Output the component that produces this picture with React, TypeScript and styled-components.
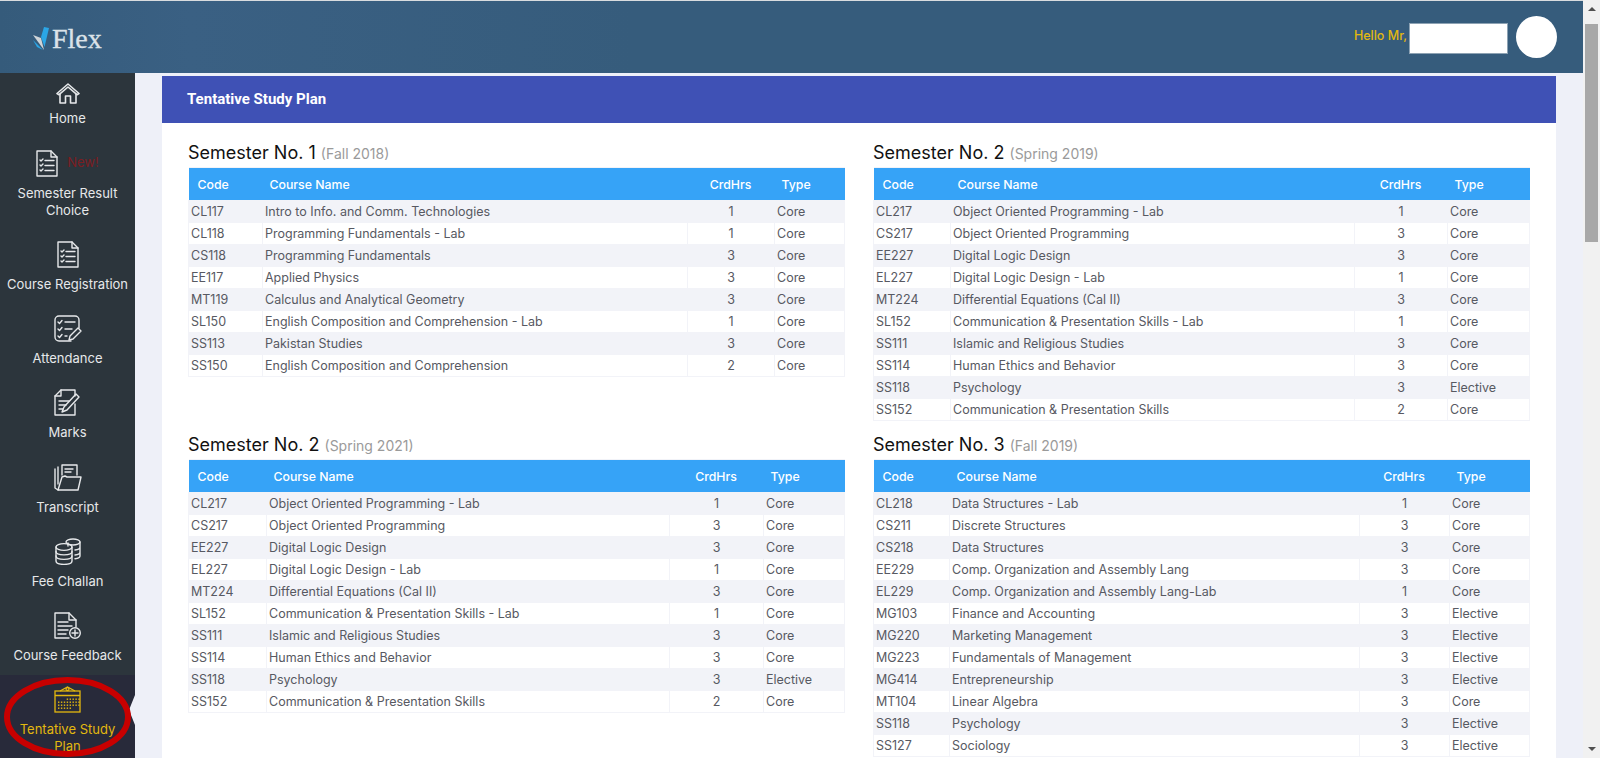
import React from 'react';
import styled, { createGlobalStyle } from 'styled-components';

const GlobalStyle = createGlobalStyle`
  html, body { margin: 0; padding: 0; height: 100%; overflow: hidden; background: #eef0f8; }
  #root { height: 100%; }
  * { box-sizing: border-box; }
`;

const FONT = `Inter, "Open Sans", "Liberation Sans", sans-serif`;

const Page = styled.div`
  display: flex;
  height: 758px;
  width: 1600px;
  font-family: ${FONT};
  overflow: hidden;
`;

const Viewport = styled.div`
  flex: 1;
  min-width: 0;
  display: flex;
  flex-direction: column;
  border-top: 1px solid #d9dcdf;
`;

const TopBar = styled.header`
  height: 72px;
  flex: none;
  display: flex;
  align-items: center;
  justify-content: space-between;
  background: linear-gradient(90deg, #355b7b 0%, #3a6083 12%, #365c7c 40%, #365c7c 100%);
  padding: 0 26px 0 33px;
`;

const Logo = styled.div`
  display: flex;
  align-items: center;
  gap: 2px;
  margin-top: 3px;
`;

const LogoText = styled.span`
  font-family: "Liberation Serif", serif;
  font-size: 28px;
  line-height: 1;
  color: #dbe2e8;
  -webkit-text-stroke: 0.35px #dbe2e8;
`;

const UserArea = styled.div`
  display: flex;
  align-items: center;
`;

const Hello = styled.span`
  font-size: 12.5px;
  font-weight: 500;
  color: #e3b80f;
  margin-right: 2px;
  margin-top: -3px;
`;

const NameBox = styled.div`
  width: 99px;
  height: 31px;
  background: #fff;
  border: 1px solid #8da2b3;
  margin-top: 3px;
`;

const Avatar = styled.div`
  width: 41px;
  height: 42px;
  border-radius: 50%;
  background: #fff;
  margin-left: 8px;
  margin-top: -1px;
`;

const Body = styled.div`
  flex: 1;
  min-height: 0;
  display: flex;
`;

const Sidebar = styled.nav`
  width: 135px;
  flex: none;
  background: #2c353c;
  display: flex;
  flex-direction: column;
`;

const NavItem = styled.div<{ $active?: boolean; $home?: boolean }>`
  position: relative;
  display: flex;
  flex-direction: column;
  align-items: center;
  padding: ${(p) => (p.$home ? '10px 0 12px' : '11px 0')};
  background: ${(p) => (p.$active ? '#282a3a' : 'transparent')};
  color: ${(p) => (p.$active ? '#e3b80f' : '#e6e8ea')};
  flex: ${(p) => (p.$active ? '1' : 'none')};
`;

const IconRow = styled.div<{ $home?: boolean }>`
  height: ${(p) => (p.$home ? '21px' : '27px')};
  margin-bottom: ${(p) => (p.$home ? '6px' : '8px')};
  display: flex;
  align-items: center;
  justify-content: center;

  svg {
    display: block;
  }
`;

const NewTag = styled.span`
  margin: -4px 0 0 9px;
  font-size: 13px;
  color: #7c1d22;
  white-space: nowrap;
`;

const NavLabel = styled.div`
  font-size: 13px;
  font-weight: 400;
  line-height: 17.1px;
  text-align: center;
`;

const Notch = styled.div`
  position: absolute;
  right: 0;
  top: 20px;
  width: 0;
  height: 0;
  border-top: 15px solid transparent;
  border-bottom: 15px solid transparent;
  border-right: 6px solid #eef0f8;
`;

const Annotation = styled.svg`
  position: absolute;
  left: 0;
  top: 0;
  pointer-events: none;
`;

const Main = styled.main`
  flex: 1;
  min-width: 0;
  padding: 3px 27px 0;
  background: #eef0f8;
  overflow: hidden;
`;

const Card = styled.section`
  background: #fff;
`;

const CardHead = styled.div`
  height: 47px;
  background: #3f51b5;
  display: flex;
  align-items: center;
  padding: 0 0 2px 25px;
  font-family: Roboto, sans-serif;
  font-weight: 700;
  font-size: 15px;
  color: #fff;
`;

const SemesterGrid = styled.div`
  display: grid;
  grid-template-columns: 657px 657px;
  column-gap: 28px;
  row-gap: 10px;
  padding: 16px 26px 40px;
`;

const Semester = styled.div``;

const Heading = styled.h3`
  margin: 0;
  height: 28px;
  line-height: 27px;
  font-size: 18px;
  font-weight: 400;
  color: #111;
`;

const Term = styled.small`
  font-size: 14px;
  font-weight: 400;
  color: #9a9a9a;
`;

const Table = styled.table`
  width: 656px;
  table-layout: fixed;
  border-collapse: collapse;
  font-size: 12.5px;
`;

const Th = styled.th<{ $center?: boolean }>`
  height: 33px;
  padding: 0 8px 0 7px;
  background: #36a3f7;
  border: 1px solid #f2f3f8;
  border-width: 1px 0;
  color: #fff;
  font-weight: 500;
  font-size: 12.3px;
  text-align: ${(p) => (p.$center ? 'center' : 'left')};

  &:first-child {
    padding-left: 9px;
  }
`;

const Td = styled.td<{ $center?: boolean }>`
  height: 22px;
  padding: 0 2px;
  border: 1px solid #f2f3f8;
  color: #575962;
  line-height: 20px;
  white-space: nowrap;
  text-align: ${(p) => (p.$center ? 'center' : 'left')};
`;

const Row = styled.tr`
  &:nth-child(odd) td {
    background: #f2f3f8;
  }
`;

const Scrollbar = styled.div`
  width: 17px;
  flex: none;
  background: #f1f1f1;
  display: flex;
  flex-direction: column;
  align-items: center;
`;

const ArrowUp = styled.div`
  width: 0;
  height: 0;
  margin: 7px 0 13px;
  border-left: 4px solid transparent;
  border-right: 4px solid transparent;
  border-bottom: 4px solid #505050;
`;

const ArrowDown = styled.div`
  width: 0;
  height: 0;
  margin-top: auto;
  margin-bottom: 7px;
  border-left: 4px solid transparent;
  border-right: 4px solid transparent;
  border-top: 4px solid #505050;
`;

const Thumb = styled.div`
  width: 13px;
  height: 218px;
  background: #a8a8a8;
`;

const S = { fill: 'none', stroke: 'currentColor', strokeWidth: 1.4, strokeLinecap: 'round', strokeLinejoin: 'round' } as const;

const HomeIcon = () => (
  <svg width="24" height="21" viewBox="0 0 24 21" {...S} strokeWidth={1.6}>
    <path d="M1 10.500 12 1l11 9.500-2 1.200-9-7.700-9 7.700z" />
    <path d="M4 11v9h5.500v-7h5v7H20v-9" />
  </svg>
);

const ChecklistDoc = () => (
  <svg width="22" height="27" viewBox="0 0 22 27" {...S}>
    <path d="M1 1h14l6 6v19H1z" />
    <path d="M15 1v6h6" />
    <path d="M4 10l1 1 2-2M9 10.500h9M4 15l1 1 2-2M9 15.500h9M4 20l1 1 2-2M9 20.500h9" />
  </svg>
);

const AttendanceIcon = () => (
  <svg width="28" height="27" viewBox="0 0 28 27" {...S}>
    <path d="M17 26H5a4 4 0 0 1-4-4V5a4 4 0 0 1 4-4h16a4 4 0 0 1 4 4v8" />
    <path d="M4 7l1.500 1.500L8 5.500M11 7h10M4 14l1.500 1.500L8 12.500M11 14h7M4 21l1.500 1.500L8 19.500M11 21h2" />
    <path d="M15 25l1-4 8-8 3 3-8 8z" />
  </svg>
);

const MarksIcon = () => (
  <svg width="27" height="27" viewBox="0 0 27 27" {...S}>
    <path d="M7 1h14v6M7 1 1 7v19h20V15" />
    <path d="M7 1v6H1" />
    <path d="M5 12h10M5 16h7M5 20h4" />
    <path d="M8 23l2-5L22 5l3 3-12 13z" />
  </svg>
);

const TranscriptIcon = () => (
  <svg width="28" height="27" viewBox="0 0 28 27" {...S}>
    <path d="M4 3v17" />
    <path d="M1 5v19l3 2" />
    <path d="M8 11V1h15v10" />
    <path d="M11 5h8M11 8h6" />
    <path d="M4 26 8 13l3-1 2 1h14l-3 13z" />
  </svg>
);

const CoinsIcon = () => (
  <svg width="26" height="27" viewBox="0 0 26 27" {...S}>
    <ellipse cx="18" cy="4" rx="7" ry="3" />
    <path d="M25 4v14c0 1.400-2 2.500-5 2.800M25 9c0 1.500-2 2.800-5 3M25 14c0 1.500-2 2.800-5 3M13 5v3" />
    <ellipse cx="9" cy="9" rx="8" ry="3.400" />
    <path d="M1 9v14c0 2 3.500 3.400 8 3.400s8-1.400 8-3.400V9" />
    <path d="M1 13.500c0 2 3.500 3.400 8 3.400s8-1.400 8-3.400M1 18c0 2 3.500 3.400 8 3.400s8-1.400 8-3.400" />
  </svg>
);

const FeedbackIcon = () => (
  <svg width="27" height="27" viewBox="0 0 27 27" {...S}>
    <path d="M15 26H1V1h14l7 7v7" />
    <path d="M15 1v7h7" />
    <path d="M4 10h10M4 14h14M4 18h10M4 22h8" />
    <circle cx="21" cy="21" r="5.300" />
    <path d="M21 18v6M18 21h6" />
  </svg>
);

const dots: [number, number][] = [];
for (let r = 0; r < 4; r++) {
  for (let c = 0; c < 8; c++) {
    if ((r === 0 && c < 3) || (r === 3 && c > 4)) continue;
    dots.push([4 + c * 2.9, 12.5 + r * 3]);
  }
}

const PlanIcon = () => (
  <svg width="27" height="27" viewBox="0 0 27 27" fill="none" stroke="currentColor" strokeWidth={1.3}>
    <rect x="1" y="5" width="25" height="21" />
    <path d="M1 9.500h25M6 5l7.500-4L21 5" />
    <circle cx="13.500" cy="3" r="1.500" />
    {dots.map(([x, y]) => (
      <rect key={`${x}-${y}`} x={x} y={y} width="1.400" height="1.400" fill="currentColor" stroke="none" />
    ))}
  </svg>
);

const LogoMark = () => (
  <svg width="17" height="24" viewBox="0 0 17 24">
    <path d="M0 8 8 11l3 12z" fill="#cfd4d8" />
    <path d="M0 13l10 10-6-3z" fill="#2ba6e6" />
    <path d="M11 0l5 1-4.500 19L8 10z" fill="#2ba6e6" />
  </svg>
);

type Course = [string, string, number, string];
type Plan = { no: number; term: string; cols: number[]; courses: Course[] };

const secondSemester: Course[] = [
  ['CL217', 'Object Oriented Programming - Lab', 1, 'Core'],
  ['CS217', 'Object Oriented Programming', 3, 'Core'],
  ['EE227', 'Digital Logic Design', 3, 'Core'],
  ['EL227', 'Digital Logic Design - Lab', 1, 'Core'],
  ['MT224', 'Differential Equations (Cal II)', 3, 'Core'],
  ['SL152', 'Communication & Presentation Skills - Lab', 1, 'Core'],
  ['SS111', 'Islamic and Religious Studies', 3, 'Core'],
  ['SS114', 'Human Ethics and Behavior', 3, 'Core'],
  ['SS118', 'Psychology', 3, 'Elective'],
  ['SS152', 'Communication & Presentation Skills', 2, 'Core'],
];

const plans: Plan[] = [
  {
    no: 1,
    term: 'Fall 2018',
    cols: [74, 425, 87, 70],
    courses: [
      ['CL117', 'Intro to Info. and Comm. Technologies', 1, 'Core'],
      ['CL118', 'Programming Fundamentals - Lab', 1, 'Core'],
      ['CS118', 'Programming Fundamentals', 3, 'Core'],
      ['EE117', 'Applied Physics', 3, 'Core'],
      ['MT119', 'Calculus and Analytical Geometry', 3, 'Core'],
      ['SL150', 'English Composition and Comprehension - Lab', 1, 'Core'],
      ['SS113', 'Pakistan Studies', 3, 'Core'],
      ['SS150', 'English Composition and Comprehension', 2, 'Core'],
    ],
  },
  { no: 2, term: 'Spring 2019', cols: [77, 404, 93, 82], courses: secondSemester },
  { no: 2, term: 'Spring 2021', cols: [78, 403, 94, 81], courses: secondSemester },
  {
    no: 3,
    term: 'Fall 2019',
    cols: [76, 410, 90, 80],
    courses: [
      ['CL218', 'Data Structures - Lab', 1, 'Core'],
      ['CS211', 'Discrete Structures', 3, 'Core'],
      ['CS218', 'Data Structures', 3, 'Core'],
      ['EE229', 'Comp. Organization and Assembly Lang', 3, 'Core'],
      ['EL229', 'Comp. Organization and Assembly Lang-Lab', 1, 'Core'],
      ['MG103', 'Finance and Accounting', 3, 'Elective'],
      ['MG220', 'Marketing Management', 3, 'Elective'],
      ['MG223', 'Fundamentals of Management', 3, 'Elective'],
      ['MG414', 'Entrepreneurship', 3, 'Elective'],
      ['MT104', 'Linear Algebra', 3, 'Core'],
      ['SS118', 'Psychology', 3, 'Elective'],
      ['SS127', 'Sociology', 3, 'Elective'],
    ],
  },
];

const navItems = [
  { label: 'Semester Result Choice', icon: <ChecklistDoc />, isNew: true },
  { label: 'Course Registration', icon: <ChecklistDoc /> },
  { label: 'Attendance', icon: <AttendanceIcon /> },
  { label: 'Marks', icon: <MarksIcon /> },
  { label: 'Transcript', icon: <TranscriptIcon /> },
  { label: 'Fee Challan', icon: <CoinsIcon /> },
  { label: 'Course Feedback', icon: <FeedbackIcon /> },
];

export default function App() {
  return (
    <Page>
      <GlobalStyle />
      <Viewport>
        <TopBar>
          <Logo>
            <LogoMark />
            <LogoText>Flex</LogoText>
          </Logo>
          <UserArea>
            <Hello>Hello Mr,</Hello>
            <NameBox />
            <Avatar />
          </UserArea>
        </TopBar>
        <Body>
          <Sidebar>
            <NavItem $home>
              <IconRow $home>
                <HomeIcon />
              </IconRow>
              <NavLabel>Home</NavLabel>
            </NavItem>
            {navItems.map((item) => (
              <NavItem key={item.label}>
                <IconRow>
                  {item.icon}
                  {item.isNew && <NewTag>New!</NewTag>}
                </IconRow>
                <NavLabel>{item.label}</NavLabel>
              </NavItem>
            ))}
            <NavItem $active>
              <IconRow>
                <PlanIcon />
              </IconRow>
              <NavLabel>
                Tentative Study
                <br />
                Plan
              </NavLabel>
              <Notch />
              <Annotation width="135" height="84">
                <ellipse cx="67.5" cy="42" rx="60.5" ry="37" fill="none" stroke="#c80000" strokeWidth="6" />
              </Annotation>
            </NavItem>
          </Sidebar>
          <Main>
            <Card>
              <CardHead>Tentative Study Plan</CardHead>
              <SemesterGrid>
                {plans.map((plan) => (
                  <Semester key={plan.term}>
                    <Heading>
                      Semester No. {plan.no} <Term>({plan.term})</Term>
                    </Heading>
                    <Table>
                      <colgroup>
                        {plan.cols.map((w, i) => (
                          <col key={i} style={{ width: w }} />
                        ))}
                      </colgroup>
                      <thead>
                        <tr>
                          <Th>Code</Th>
                          <Th>Course Name</Th>
                          <Th $center>CrdHrs</Th>
                          <Th>Type</Th>
                        </tr>
                      </thead>
                      <tbody>
                        {plan.courses.map(([code, name, hrs, type]) => (
                          <Row key={code}>
                            <Td>{code}</Td>
                            <Td>{name}</Td>
                            <Td $center>{hrs}</Td>
                            <Td>{type}</Td>
                          </Row>
                        ))}
                      </tbody>
                    </Table>
                  </Semester>
                ))}
              </SemesterGrid>
            </Card>
          </Main>
        </Body>
      </Viewport>
      <Scrollbar>
        <ArrowUp />
        <Thumb />
        <ArrowDown />
      </Scrollbar>
    </Page>
  );
}
